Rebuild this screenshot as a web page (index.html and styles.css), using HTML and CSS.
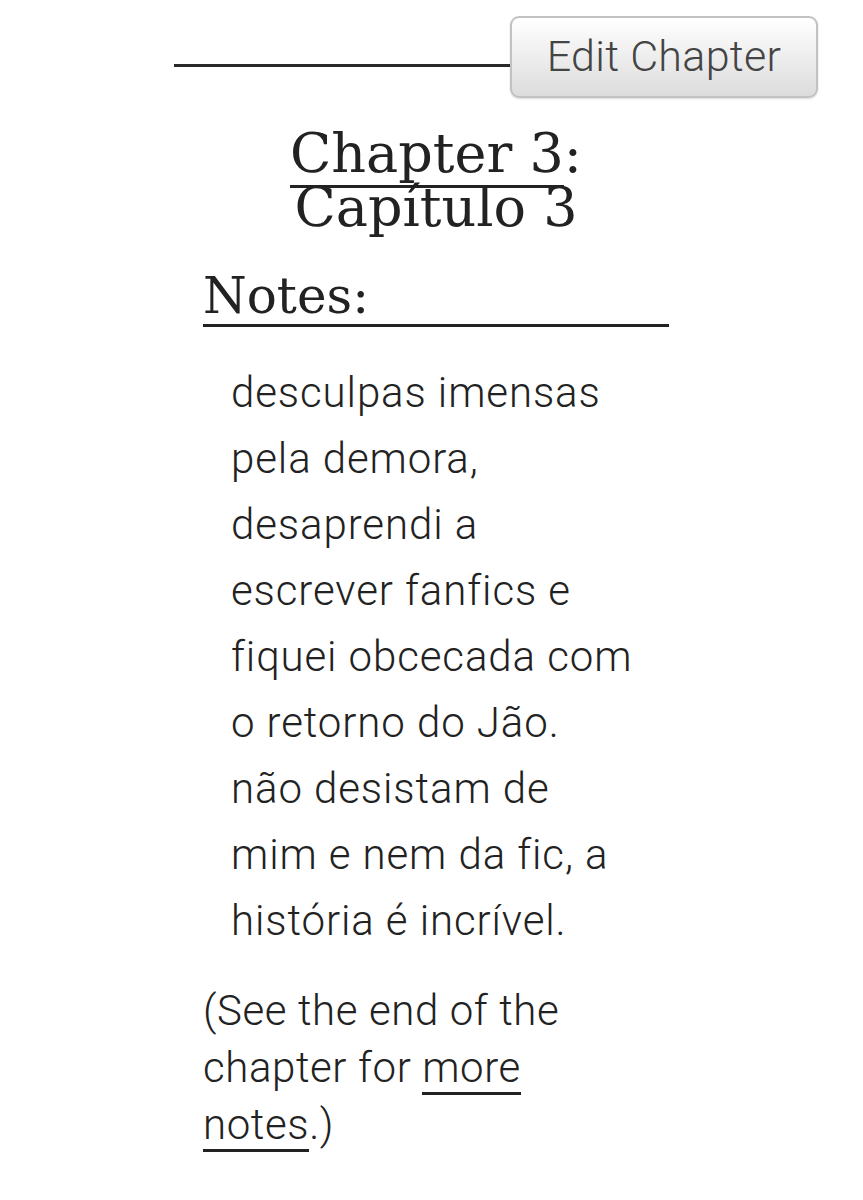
FILE: index.html
```html
<!DOCTYPE html>
<html>
<head>
    <title>Chapter 3: Capítulo 3</title>
    <link rel="stylesheet" href="styles.css">
</head>
<body>
    <div class="chapter-nav">
        <div class="nav-rule"></div>
        <a href="#" class="edit-button">Edit Chapter</a>
    </div>

    <div class="chapter">
        <h3 class="title"><a href="#">Chapter 3</a>:<br>Capítulo 3</h3>

        <div class="notes">
            <h3 class="heading">Notes:</h3>
            <blockquote class="userstuff">
                <p>desculpas imensas pela demora, desaprendi a escrever fanfics e fiquei obcecada com o retorno do Jão. não desistam de mim e nem da fic, a história é incrível.</p>
            </blockquote>
            <p class="jump">(See the end of the chapter for <a href="#">more notes</a>.)</p>
        </div>
    </div>
</body>
</html>
```

FILE: styles.css
```css
body {
    margin: 0;
    background-color: #ffffff;
    color: #222222;
    font-family: Roboto, "Noto Sans", sans-serif;
    font-weight: 300;
}
a {
    color: #222222;
    text-decoration: none;
}
.chapter-nav {
    display: flex;
    margin: 16px 45px 0 174px;
}
.nav-rule {
    flex: 1;
    height: 3px;
    margin-top: 48px;
    background-color: #2a2a2a;
}
.edit-button {
    display: flex;
    align-items: center;
    justify-content: center;
    box-sizing: border-box;
    width: 308px;
    height: 82px;
    padding-bottom: 2px;
    border: 2px solid #c2c2c2;
    border-radius: 9px;
    background: linear-gradient(#ffffff, #dcdcdc);
    box-shadow: 0 1px 2px rgba(0, 0, 0, 0.15);
    color: #444444;
    font-size: 43px;
    letter-spacing: 0.3px;
}
.chapter {
    width: 466px;
    margin-left: 203px;
}
.title {
    margin: 29px 0 0;
    text-align: center;
    font-family: "DejaVu Serif", serif;
    font-weight: normal;
    font-size: 54px;
    line-height: 54px;
}
.title a {
    border-bottom: 3px solid #222222;
}
.heading {
    margin: 33px 0 0;
    font-family: "DejaVu Serif", serif;
    font-weight: normal;
    font-size: 50px;
    line-height: 56px;
    border-bottom: 3px solid #222222;
}
.userstuff {
    width: 404px;
    margin: 33px 0 0 28px;
}
.userstuff p {
    margin: 0;
    font-size: 42px;
    line-height: 66px;
    letter-spacing: 0.9px;
}
.jump {
    margin: 28px 12px 0 0;
    font-size: 42px;
    line-height: 57px;
    letter-spacing: 0.6px;
}
.jump a {
    border-bottom: 3px solid #222222;
}
```
